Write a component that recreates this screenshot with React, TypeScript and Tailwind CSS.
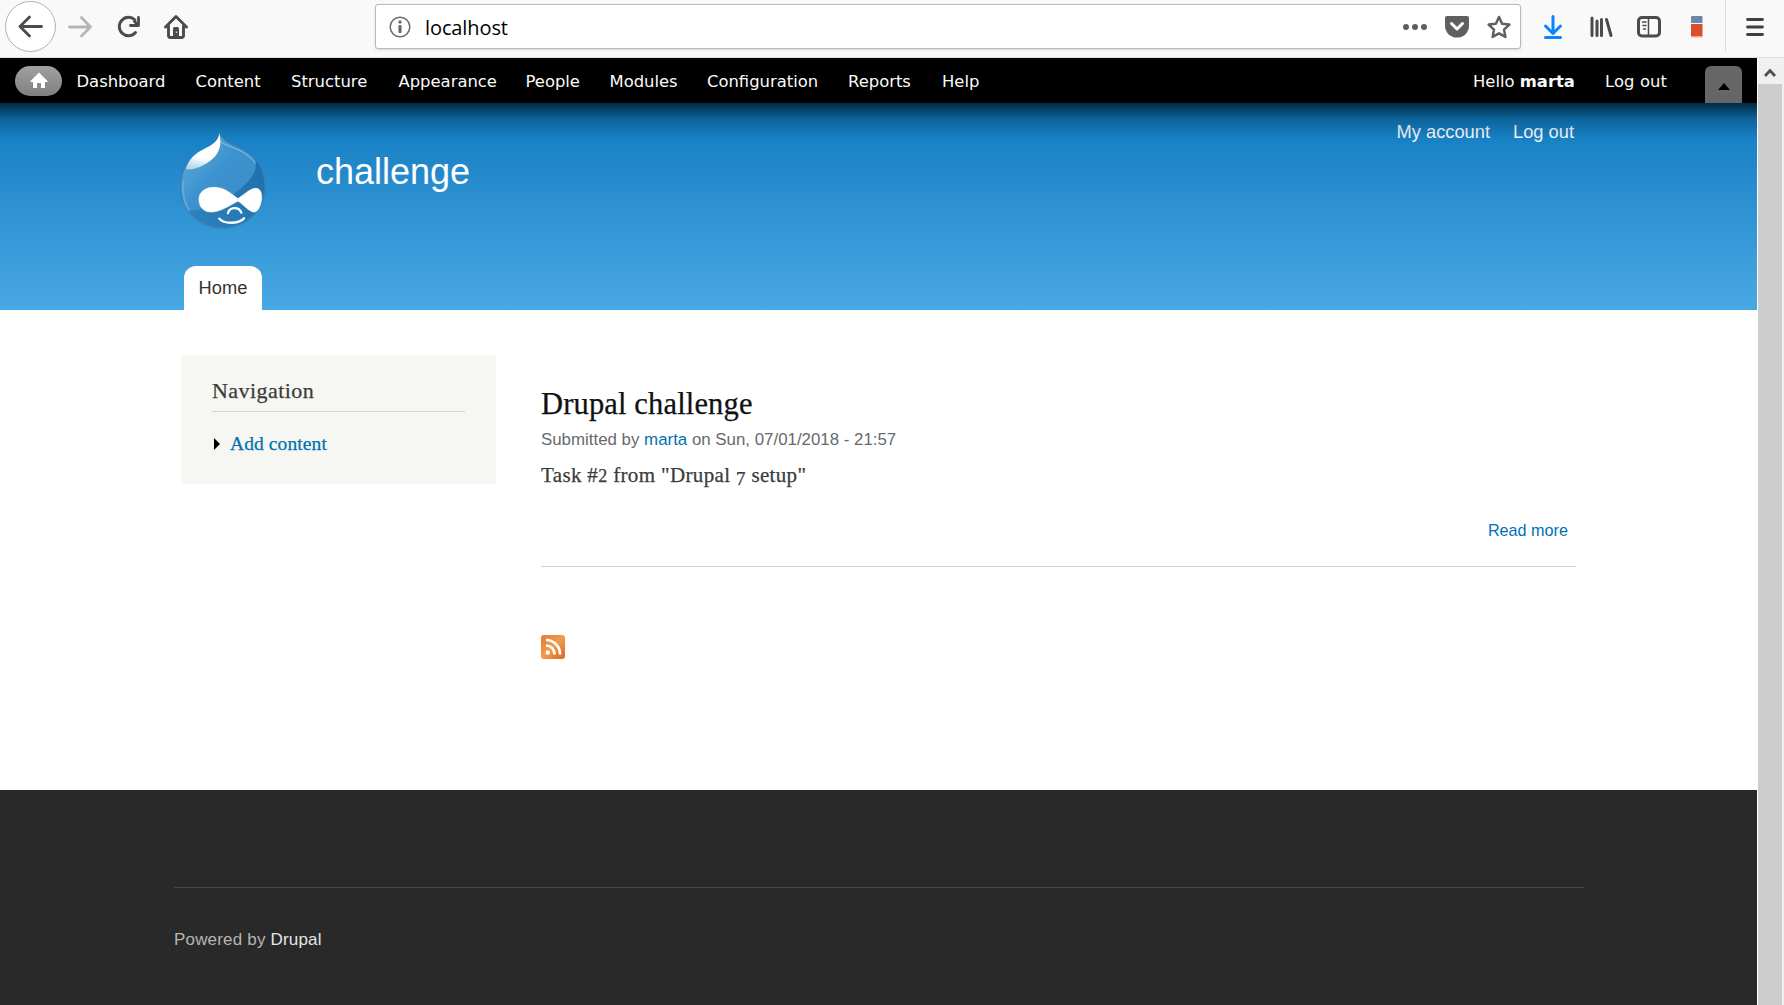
import React from "react";

const sans = "font-['Liberation_Sans',sans-serif]";
const serif = "font-['Liberation_Serif',serif] [-webkit-text-stroke:0.25px_currentColor]";

function BrowserBar() {
  return (
    <div className="flex h-[58px] shrink-0 items-start border-b border-[#e0e0e0] bg-[#f9f9fa]">
      <div className="flex h-[53px] w-[375px] shrink-0 items-center">
        <svg width="200" height="53" viewBox="0 0 200 53" fill="none" strokeLinecap="round" strokeLinejoin="round">
          <circle cx="30.5" cy="26.5" r="25" fill="#fff" stroke="#b1b1b1" />
          <path d="M41.500 26.500H20M29.500 17l-9.500 9.500 9.500 9.500" stroke="#4a4a4f" strokeWidth="2.800" />
          <path d="M69.500 27h21M81.500 17.500l9 9.500-9 9" stroke="#b5b5b6" strokeWidth="2.800" />
          <path d="M135 20a9.200 9.200 0 1 0 .5 12.500" stroke="#4a4a4f" strokeWidth="2.900" />
          <path d="M138.500 17.500v8h-8M138.500 25.500l-4-4" stroke="#4a4a4f" strokeWidth="2.800" />
          <path d="M165.500 27L176 16.500 186.500 27M168.500 26V35.500a2 2 0 0 0 2 2H181.500a2 2 0 0 0 2-2V26" stroke="#4a4a4f" strokeWidth="2.900" />
          <path d="M173 37v-8.500a1.500 1.500 0 0 1 1.500-1.500h3a1.500 1.500 0 0 1 1.500 1.500V37z" fill="#4a4a4f" />
          <rect x="175.800" y="31.500" width="1.500" height="1.500" fill="#d0d0d0" />
        </svg>
      </div>
      <div className="mt-1 flex h-[45px] w-[1146px] shrink-0 items-center rounded-[3px] border border-[#b8b8b8] bg-white pl-[13px] shadow-sm">
        <svg width="22" height="22" viewBox="0 0 22 22">
          <circle cx="11" cy="11" r="9.800" fill="none" stroke="#6b6b6b" strokeWidth="1.500" />
          <circle cx="11" cy="6" r="1.700" fill="#6b6b6b" />
          <rect x="9.400" y="9" width="3.200" height="8" rx="1" fill="#6b6b6b" />
        </svg>
        <span className="ml-[14px] mt-[2px] font-['Open_Sans',sans-serif] text-[20px] leading-6 tracking-[-0.1px] text-black">localhost</span>
        <svg className="ml-auto mr-[8px]" width="110" height="30" viewBox="1402 12 110 30">
          <g fill="#5f5f60">
            <circle cx="1406" cy="27" r="3" />
            <circle cx="1415" cy="27" r="3" />
            <circle cx="1424" cy="27" r="3" />
            <path d="M1447 16h20a2 2 0 0 1 2 2v8a12 11.500 0 0 1-24 0v-8a2 2 0 0 1 2-2z" />
          </g>
          <path d="M1451.500 23.500l5.500 5.500 5.500-5.500" fill="none" stroke="#fff" strokeWidth="3" strokeLinecap="round" strokeLinejoin="round" />
          <path d="M1499 17l3.100 6.700 7.300.9-5.400 5 1.400 7.300-6.400-3.600-6.400 3.600 1.400-7.300-5.400-5 7.300-.9z" fill="none" stroke="#5f5f60" strokeWidth="2.500" strokeLinejoin="round" />
        </svg>
      </div>
      <svg width="263" height="57" viewBox="1521 0 263 57" fill="none" strokeLinecap="round" strokeLinejoin="round">
        <path d="M1553 16.500V33M1545.500 26l7.500 7.500 7.500-7.500M1545.500 37.500h15" stroke="#0a84ff" strokeWidth="3" />
        <path d="M1592 18v17.500M1597 21v14.500M1601.500 19.500v16M1606.500 19.500l4.500 16" stroke="#4a4a4f" strokeWidth="3" />
        <rect x="1638.500" y="17.500" width="21" height="18.500" rx="3.500" stroke="#4a4a4f" strokeWidth="3" />
        <path d="M1648.500 18v18" stroke="#4a4a4f" strokeWidth="1.500" />
        <path d="M1642.500 22h3.500M1643 25.500h3M1643.500 29h2" stroke="#4a4a4f" strokeWidth="1.500" />
        <rect x="1691" y="16" width="11.500" height="7" rx="1" fill="#6688aa" />
        <rect x="1691" y="24" width="11.500" height="12" fill="#d94f2b" />
        <path d="M1691 36h11.500v1.500h-11.500z" fill="#e9a890" />
        <path d="M1725.500 1v50" stroke="#dcdcdc" />
        <path d="M1747.500 19.500h15M1747.500 27h15M1747.500 34.500h15" stroke="#3f3f42" strokeWidth="2.800" />
      </svg>
    </div>
  );
}

const menu = [
  ["Dashboard", "w-[119px]"],
  ["Content", "w-[95.500px]"],
  ["Structure", "w-[107.500px]"],
  ["Appearance", "w-[127px]"],
  ["People", "w-[84px]"],
  ["Modules", "w-[97.500px]"],
  ["Configuration", "w-[141px]"],
  ["Reports", "w-[94px]"],
  ["Help", "w-[60px]"],
];

function AdminToolbar() {
  return (
    <div className="flex h-[45px] items-center bg-black pl-[15px] font-['DejaVu_Sans',sans-serif] text-[16.4px] leading-5 text-[#fafafa]">
      <div className="flex h-[30px] w-[47px] items-center justify-center rounded-full bg-gradient-to-b from-[#a0a0a0] to-[#808080]">
        <svg width="18" height="17" viewBox="0 0 18 17">
          <path d="M9 .5l8.500 8.500v1H15v6h-4v-5H7v5H3v-6H.5V9z" fill="#fff" />
        </svg>
      </div>
      <nav className="ml-[14.5px] flex pt-[2px]">
        {menu.map(([label, width]) => (
          <a key={label} className={`${width} shrink-0 whitespace-nowrap`}>{label}</a>
        ))}
      </nav>
      <div className="ml-auto flex h-full w-[284px] shrink-0 items-center whitespace-nowrap">
        <span className="w-[132px] pt-[2px]">Hello <b>marta</b></span>
        <span className="pt-[2px] tracking-[0.1px]">Log out</span>
        <div className="ml-auto mr-[15px] flex h-[37px] w-[37px] items-center justify-center self-end rounded-t-[6px] bg-[#666] pt-1">
          <svg width="12" height="7" viewBox="0 0 12 7"><path d="M6 0l6 7H0z" fill="#000" /></svg>
        </div>
      </div>
    </div>
  );
}

function DrupalLogo() {
  return (
    <svg width="86" height="97" viewBox="60 68 258 291">
      <defs>
        <linearGradient id="drop" x1="0" y1="0.2" x2="0.7" y2="0.9">
          <stop offset="0" stopColor="#5fa9da" />
          <stop offset="0.45" stopColor="#3d93cf" />
          <stop offset="1" stopColor="#3a8dc9" />
        </linearGradient>
        <linearGradient id="shade" x1="1" y1="0.3" x2="0" y2="1">
          <stop offset="0" stopColor="#1f72ae" />
          <stop offset="1" stopColor="#2f82bd" />
        </linearGradient>
        <linearGradient id="gloss" x1="0.7" y1="0" x2="0.5" y2="1">
          <stop offset="0.7" stopColor="#fff" />
          <stop offset="1" stopColor="#fff" stopOpacity="0.6" />
        </linearGradient>
        <filter id="soft" x="-10%" y="-10%" width="120%" height="120%">
          <feGaussianBlur stdDeviation="2" />
        </filter>
      </defs>
      <path d="M178 69C186 92 207 102 235 113C285 135 315 180 315 232C315 305 258 356 188 356C116 356 62 300 62 232C62 185 82 152 122 128C152 112 178 100 178 69Z" fill="url(#drop)" stroke="#3a7aa8" strokeWidth="3" />
      <path d="M182 96C192 106 215 112 240 124C260 134 276 146 286 162" fill="none" stroke="#8cc3e6" strokeWidth="3" filter="url(#soft)" />
      <path d="M70 215C66 255 74 285 88 303" fill="none" stroke="#63a9d8" strokeWidth="6" filter="url(#soft)" />
      <path d="M286 152C305 174 313 200 313 232C313 303 258 354 188 354C145 354 108 335 86 303C140 308 215 265 256 225C282 200 292 176 286 152Z" fill="url(#shade)" />
      <path d="M178 71C187 108 178 134 150 155C124 174 98 183 78 179C84 152 104 133 132 119C160 105 175 96 178 71Z" fill="url(#gloss)" filter="url(#soft)" />
      <path d="M117 270C117 245 140 233 165 234C195 235 215 255 234 268C248 260 270 237 287 237C303 237 306 255 305 268C302 290 294 308 282 308C268 308 250 285 234 275C210 288 180 308 153 308C130 308 117 292 117 270Z" fill="#fff" stroke="#fff" strokeWidth="2" />
      <path d="M204 311C209 292 237 291 244 310M178 328C190 344 235 345 252 327" fill="none" stroke="#fff" strokeWidth="7" strokeLinecap="round" />
    </svg>
  );
}

function Header() {
  return (
    <header className={`relative flex h-[207px] justify-between bg-gradient-to-b from-[#0779bf] to-[#48a9e4] pl-[180px] pr-[182px] ${sans} text-white`}>
      <div className="pointer-events-none absolute inset-x-0 top-0 h-[36px] bg-gradient-to-b from-black/65 via-black/20 via-45% to-transparent" />
      <div className="flex flex-col justify-between">
        <div className="flex pt-[29px]">
          <DrupalLogo />
          <h1 className="ml-[50px] mt-[20px] text-[36px] leading-[40px]">challenge</h1>
        </div>
        <div className="ml-1 flex h-[44px] w-[78px] items-center justify-center rounded-t-[12px] bg-white text-[18.3px] leading-6 text-[#333]">Home</div>
      </div>
      <nav className="mr-px mt-[17px] flex h-6 gap-[23px] text-[18.3px] leading-6 text-[#f3f8fc]">
        <a>My account</a>
        <a>Log out</a>
      </nav>
    </header>
  );
}

function Sidebar() {
  return (
    <aside className={`h-[129px] w-[315px] shrink-0 border border-[#f9f9f2] bg-[#f6f6f2] px-[30px] pt-[20px] ${serif}`}>
      <h2 className="h-[36px] border-b border-[#d3d7cf] text-[22px] leading-[30px] tracking-[0.45px] text-[#3b3b3b]">Navigation</h2>
      <div className="mt-[20px] flex items-center text-[19.5px] leading-6 tracking-[0.1px] text-[#0071b3]">
        <svg className="ml-[2px] mr-[10px]" width="6" height="12" viewBox="0 0 6 12"><path d="M0 0l6 6-6 6z" fill="#000" /></svg>
        Add content
      </div>
    </aside>
  );
}

function Article() {
  return (
    <article className="ml-[45px] flex w-[1035px] flex-col">
      <h2 className={`${serif} mt-[29px] text-[30.5px] leading-[40px] tracking-[0.15px] text-[#111]`}>Drupal challenge</h2>
      <p className={`${sans} mt-[4px] text-[16.87px] leading-6 text-[#68696b]`}>
        Submitted by <span className="text-[#0071b3]">marta</span> on Sun, 07/01/2018 - 21:57
      </p>
      <p className={`${serif} mt-[11px] h-6 text-[21px] leading-6 tracking-[0.35px] text-[#3b3b3b]`}>
        Task #<span className="text-[18px]">2</span> from "Drupal <span className="relative top-[3px] text-[19px]">7</span> setup"
      </p>
      <div className={`${sans} mt-[31px] h-[49px] border-b border-[#d3d3d3] pr-[8px] text-right text-[16.2px] leading-6 text-[#0071b3]`}>Read more</div>
      <svg className="mt-[68px]" width="24" height="24" viewBox="0 0 24 24">
        <defs>
          <linearGradient id="rss" x1="0" y1="0" x2="1" y2="1">
            <stop offset="0" stopColor="#e27c32" />
            <stop offset="0.5" stopColor="#f39a4d" />
            <stop offset="1" stopColor="#d9661f" />
          </linearGradient>
        </defs>
        <rect width="24" height="24" rx="3" fill="url(#rss)" />
        <circle cx="6.800" cy="17.500" r="2.200" fill="#fff" />
        <path d="M5 10.500a8.500 8.500 0 0 1 8.500 9M5 5a14 14 0 0 1 14 14.500" fill="none" stroke="#fff" strokeWidth="2.600" />
      </svg>
    </article>
  );
}

function Footer() {
  return (
    <footer className={`h-[215px] bg-[#292929] pl-[174px] pr-[173px] pt-[97px] ${sans}`}>
      <div className="border-t border-[#484848] pt-[40px] text-[17px] leading-6 tracking-[0.18px] text-[#b5b5b5]">
        Powered by <span className="text-[#e4e4e4]">Drupal</span>
      </div>
    </footer>
  );
}

export default function App() {
  return (
    <div className="flex h-[1005px] w-[1784px] flex-col overflow-hidden bg-white">
      <BrowserBar />
      <div className="flex h-[947px]">
        <div className="flex w-[1757px] flex-col">
          <AdminToolbar />
          <Header />
          <main className="flex h-[480px] items-start pl-[181px] pt-[45px]">
            <Sidebar />
            <Article />
          </main>
          <Footer />
        </div>
        <div className="flex w-[27px] flex-col border-l border-white bg-[#f0f0f0]">
          <div className="flex h-[26px] items-center justify-center pt-[3px] pr-[2px]">
            <svg width="12" height="10" viewBox="0 0 12 10"><path d="M1 8l5-5.500L11 8" fill="none" stroke="#505050" strokeWidth="2.800" /></svg>
          </div>
          <div className="w-[24px] grow bg-[#cdcdcd]" />
        </div>
      </div>
    </div>
  );
}
